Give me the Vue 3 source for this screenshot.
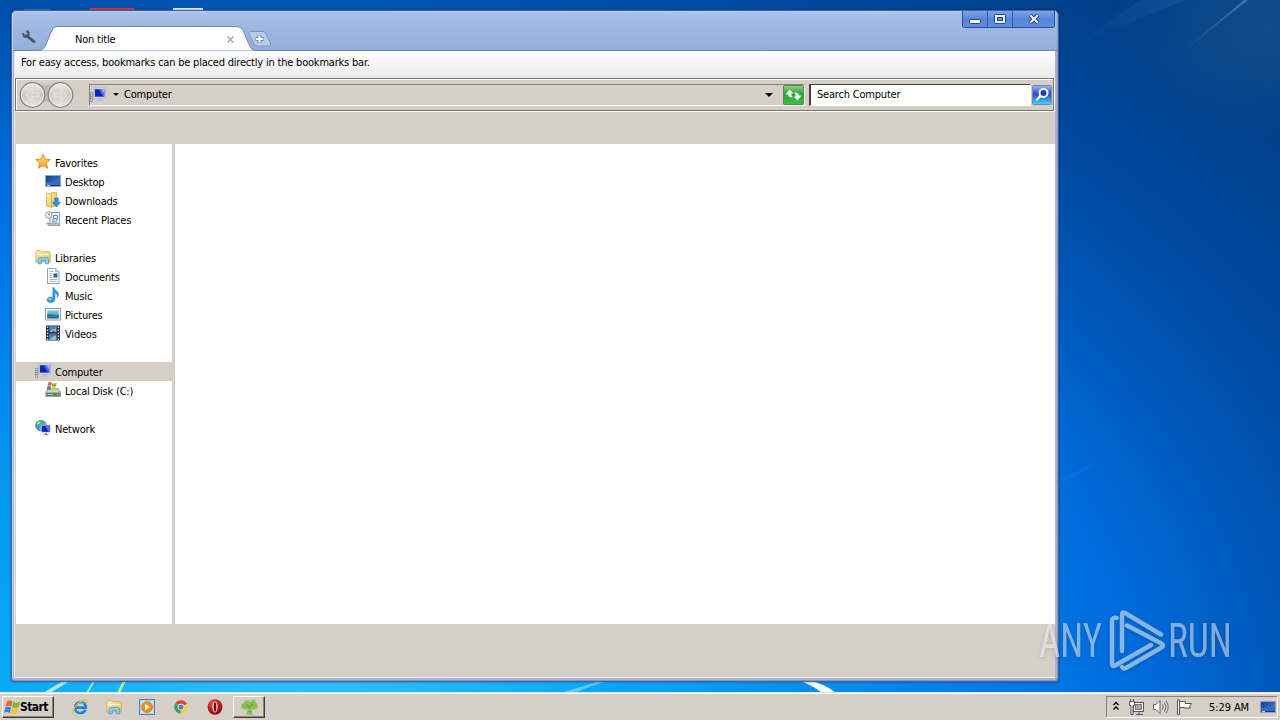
<script setup>
import { ref } from 'vue';

const clock = ref('5:29 AM');
const searchText = ref('Search Computer');
const selected = ref('Computer');

// Navigation pane, an empty label is a spacer row
const navItems = [
    { label: 'Favorites', icon: 'star' },
    { label: 'Desktop', icon: 'desktop', child: true },
    { label: 'Downloads', icon: 'downloads', child: true },
    { label: 'Recent Places', icon: 'recent', child: true },
    { label: '' },
    { label: 'Libraries', icon: 'folder' },
    { label: 'Documents', icon: 'document', child: true },
    { label: 'Music', icon: 'music', child: true },
    { label: 'Pictures', icon: 'picture', child: true },
    { label: 'Videos', icon: 'video', child: true },
    { label: '' },
    { label: 'Computer', icon: 'computer' },
    { label: 'Local Disk (C:)', icon: 'disk', child: true },
    { label: '' },
    { label: 'Network', icon: 'network' },
];

const quickLaunch = ['ie', 'folder', 'player', 'chrome', 'opera'];

const select = (item) => {
    if (item.label) {
        selected.value = item.label;
    }
};
</script>

<template>
    <div class="screen">
        <!-- icon definitions -->
        <svg class="defs" width="0" height="0">
            <defs>
                <linearGradient id="gGold" x1="0" y1="0" x2="0" y2="1"><stop offset="0" stop-color="#ffe680" /><stop offset="1" stop-color="#f39a1c" /></linearGradient>
                <linearGradient id="gFolder" x1="0" y1="0" x2="1" y2="1"><stop offset="0" stop-color="#fff3b4" /><stop offset="1" stop-color="#e3bd52" /></linearGradient>
                <linearGradient id="gScreen" x1="0" y1="0" x2="1" y2="1"><stop offset="0" stop-color="#123c86" /><stop offset=".5" stop-color="#2a62ba" /><stop offset="1" stop-color="#123b80" /></linearGradient>
                <linearGradient id="gMon" x1="0" y1="0" x2="1" y2="0"><stop offset="0" stop-color="#0a16a8" /><stop offset=".5" stop-color="#1a30d8" /><stop offset="1" stop-color="#7f9af0" /></linearGradient>
                <linearGradient id="gSky" x1="0" y1="0" x2="0" y2="1"><stop offset="0" stop-color="#8fd0f2" /><stop offset="1" stop-color="#2b7cc0" /></linearGradient>
                <radialGradient id="gRed" cx=".4" cy=".3" r=".8"><stop offset="0" stop-color="#f06a60" /><stop offset=".5" stop-color="#c01a18" /><stop offset="1" stop-color="#6d0808" /></radialGradient>
            </defs>
            <symbol id="star" viewBox="0 0 16 16">
                <path d="M8 .3l2.100 4.800 5.300.5-4 3.500 1.200 5.200L8 11.600l-4.600 2.700 1.200-5.200-4-3.500 5.300-.5z" fill="url(#gGold)" stroke="#e08a1e" stroke-width=".9" stroke-linejoin="round" />
            </symbol>
            <symbol id="desktop" viewBox="0 0 16 16">
                <rect x=".5" y="2.500" width="15" height="11" fill="url(#gScreen)" stroke="#90a4bc" />
                <path d="M1 13V9c4 2 9-1 14-5v9z" fill="#3a78cc" opacity=".7" />
                <path d="M1 12.500h14" stroke="#203864" />
                <path d="M2 12.500h3" stroke="#b8d8f4" />
            </symbol>
            <symbol id="downloads" viewBox="0 0 16 16">
                <path d="M1.500 1.500h4l1-.9h5v13l-5 1.800-5-1.400z" fill="url(#gFolder)" stroke="#cfa644" stroke-width=".8" />
                <path d="M6.500 1.500v13.500" stroke="#d9ae42" stroke-width=".8" />
                <path d="M9.800 6h3.400v4.300h2.300L11.500 15l-4-4.700h2.300z" fill="#2e93e4" stroke="#1768b0" stroke-width=".6" />
            </symbol>
            <symbol id="recent" viewBox="0 0 16 16">
                <path d="M5 1.500h9.500v13H3.500l-2-2.500H5z" fill="#eef3f7" stroke="#8493a2" stroke-width=".9" />
                <path d="M3 12.500h10.500v2H4.500z" fill="#b5c2ce" stroke="#8594a4" stroke-width=".6" />
                <path d="M8.500 4.500h4v3h-4zM7 9h3M11 9h2M7 11h5" fill="none" stroke="#6588ac" />
                <circle cx="3.800" cy="4" r="3.200" fill="#f2f5f7" stroke="#8b9298" stroke-width=".9" />
                <path d="M3.800 2v2h1.500" fill="none" stroke="#666" stroke-width=".7" />
            </symbol>
            <symbol id="folder" viewBox="0 0 16 16">
                <path d="M.8 13V3l1-1.500h4l1 1.200h7.700l.8 1.200V13z" fill="url(#gFolder)" stroke="#d0aa4b" stroke-width=".8" />
                <path d="M1.500 5.500h13" stroke="#fff8cf" />
                <path d="M3 14.800v-4.300q0-2 2-2h6.500q2.200 0 2.200 2v4.300h-3.200v-3.300H6.200v3.300z" fill="#8fcdf0" stroke="#4799cf" stroke-width=".8" />
            </symbol>
            <symbol id="document" viewBox="0 0 16 16">
                <path d="M2.500.5h8.200l3.300 3.300v11.700H2.500z" fill="#fff" stroke="#8898a8" stroke-width=".9" />
                <path d="M10.700.5v3.300H14" fill="#d5e4f2" stroke="#8898a8" stroke-width=".7" />
                <path d="M4.500 3.500h4M4.500 5.500h3M4.500 7.500h3M4.500 9.500h3M4.500 11.500h7.500M4.500 13.300h7.500" stroke="#86a6c8" stroke-width=".8" />
                <rect x="8.500" y="5.500" width="4" height="4" fill="#355f8a" />
            </symbol>
            <symbol id="music" viewBox="0 0 16 16">
                <path d="M9 .5c.3 3.200 4.500 3.200 4.500 6.700 0 1.600-.8 2.600-1.500 3.200.8-2.700-.7-4.200-2-4.600v6.500c0 2-2 3.300-4.200 3.300-2 0-3.800-1-3.800-2.800 0-1.700 1.800-2.800 3.700-2.800 1 0 1.700.2 2.200.5V.5z" fill="#2f9be4" stroke="#1976bb" stroke-width=".5" />
                <ellipse cx="5" cy="12" rx="1.700" ry=".9" fill="#9bd8fa" />
            </symbol>
            <symbol id="picture" viewBox="0 0 16 16">
                <rect x=".5" y="2.500" width="15" height="11.500" fill="#fff" stroke="#8a9aa8" />
                <rect x="2.200" y="4.200" width="11.600" height="8.200" fill="url(#gSky)" />
                <path d="M2.200 8c3 1 5-.3 7 1.400 2 0 3-.4 4.600-.6v1.300H2.200z" fill="#2f7d51" />
                <path d="M2.200 10.200h11.600v2.200H2.200z" fill="#2c6ca5" />
            </symbol>
            <symbol id="video" viewBox="0 0 16 16">
                <rect x="1" y=".5" width="14" height="15" fill="#252c38" />
                <path d="M4.200 1h7.600v6.300H4.200zM4.200 8.500h7.600V15H4.200z" fill="#3a88b8" />
                <path d="M5 7c1-5 5-1 6-5v5zM5 15c1-4 4-2 6-6v6z" fill="#7fc2df" />
                <path d="M8 5l3 2.300H7zM8 9h3.500v2z" fill="#b6404a" />
                <path d="M2.600 1.500V15M13.400 1.500V15" stroke="#dbe5ed" stroke-width="1.300" stroke-dasharray="1.400 1.600" />
            </symbol>
            <symbol id="computer" viewBox="0 0 16 16">
                <path d="M.5 5.500h2v9h-2z" fill="#d4d8d6" stroke="#7e857f" stroke-width=".7" />
                <path d="M1.300 7v5" stroke="#559458" stroke-width=".8" stroke-dasharray="1 1" />
                <rect x="3.500" y="1" width="12.200" height="10" fill="#dfe5f2" stroke="#9aa4ba" stroke-width=".6" />
                <rect x="4.800" y="2.200" width="9.500" height="7.500" fill="#1020b4" />
                <path d="M8.500 2.200h5.800v7.500h-1z" fill="#4c6ae6" />
                <path d="M11 2.200h3.300v4z" fill="#a5b7f6" />
                <path d="M8.300 11h3v1.800h2.200v1H6.300v-1h2z" fill="#b4bcc8" />
            </symbol>
            <symbol id="flag" viewBox="0 0 16 16">
                <path d="M2.600 2.500Q5 .5 8 2.400L6.900 7.200Q4.500 5.600 1.400 7.200z" fill="#ec642b" />
                <path d="M8.800 2.800q3 1.600 6.200-.2l-1.300 5q-3 1.500-6-.1z" fill="#76b83a" />
                <path d="M1.200 8.100q3-1.700 5.500 0l-1.200 5q-2.500-1.700-5.400-.1z" fill="#3a86d8" />
                <path d="M7.500 8.400q3 1.600 6 .1l-1.300 5q-3 1.600-5.900-.1z" fill="#f8c329" />
            </symbol>
            <symbol id="disk" viewBox="0 0 16 16">
                <path d="M.8 10L4 6.800h9l2.600 3.400v4.200H.8z" fill="#cfd4d4" stroke="#717b7d" stroke-width=".8" />
                <rect x="1.500" y="10.600" width="13.400" height="3.400" fill="#68786f" />
                <path d="M3 12.500h5" stroke="#b5cfb5" />
                <circle cx="12.800" cy="12.400" r=".9" fill="#63e04c" />
                <use href="#flag" x="1.500" y="-1" width="11" height="11" />
            </symbol>
            <symbol id="network" viewBox="0 0 16 16">
                <circle cx="6" cy="5.600" r="5.400" fill="#3e9ed8" stroke="#2673ac" stroke-width=".6" />
                <path d="M2 2.400C4 .1 6 .6 7 1.900L5.500 4.600 3 6.100 1.200 4.600zM4 8l3 1-1.400 2zM8 .8l3 2.800-2.700.6z" fill="#5fbd4a" />
                <path d="M2.500 4l2.300-2" stroke="#e6f8ff" stroke-width="1.100" />
                <rect x="5.800" y="4.800" width="10" height="8" fill="#d4daea" />
                <rect x="6.700" y="5.600" width="8.200" height="6.300" fill="#1222b8" />
                <path d="M10 5.600h4.900v6.300h-1z" fill="#5674e8" />
                <path d="M10 12.800h2v1.500h1.700v1H8.300v-1H10z" fill="#7c8bbd" />
            </symbol>
            <symbol id="ie" viewBox="0 0 16 16">
                <path d="M4 8.600h9.800Q13.800 3.200 8.600 3.200T3.200 8.600 8.600 14q3.500 0 4.800-3.200" fill="none" stroke="#2482d6" stroke-width="2.600" />
                <path d="M4.500 5q3.500-3 7.500-.2" fill="none" stroke="#6cc0f4" stroke-width="1" />
                <path d="M2 15.300C-1 13 3.500 5 9.500 2c4-2 6.300-1.200 5 2.200" fill="none" stroke="#e9b92d" stroke-width="1.200" />
            </symbol>
            <symbol id="player" viewBox="0 0 16 16">
                <rect x=".5" y=".5" width="15" height="15" fill="#a9d0f3" stroke="#4c87c2" />
                <rect x="2" y="2" width="12" height="12" fill="#d7ebfc" />
                <circle cx="8" cy="8" r="5.600" fill="#f58a16" stroke="#d46a08" stroke-width=".6" />
                <path d="M6.200 4.800L11 8l-4.800 3.200z" fill="#fff" />
            </symbol>
            <symbol id="chrome" viewBox="0 0 16 16">
                <path d="M8 8L2.200 4.500A6.700 6.700 0 0 1 14 5z" fill="#dc4537" />
                <path d="M8 8l6-3a6.700 6.700 0 0 1-6.600 9.700z" fill="#f8ce3c" />
                <path d="M8 8l-.6 6.700A6.700 6.700 0 0 1 2.200 4.500z" fill="#3ea34c" />
                <circle cx="8" cy="8" r="3.300" fill="#fff" />
                <circle cx="8" cy="8" r="2.600" fill="#3f7fe8" />
            </symbol>
            <symbol id="opera" viewBox="0 0 16 16">
                <ellipse cx="8" cy="8" rx="7.400" ry="7.700" fill="url(#gRed)" />
                <ellipse cx="8" cy="8" rx="2.600" ry="5.600" fill="#e9dcdc" />
                <ellipse cx="8" cy="8" rx="1.300" ry="4.800" fill="#7a0b0b" />
            </symbol>
            <symbol id="tree" viewBox="0 0 16 16">
                <path d="M8 8v6" stroke="#76a348" stroke-width="4" />
                <path d="M4 1.500h3l1.500 1.500L10 1.200h3l1 2.300 1.500 1.500v3L13 10l-3-.5L8 11l-2.500-1.500L3 10 .5 8V5L2.500 4z" fill="#86c053" stroke="#9dcf74" stroke-linejoin="round" />
                <path d="M5 5l3 3 3-3" fill="none" stroke="#62a038" />
                <path d="M3.500 15l4.500-3 4.500 3z" fill="#8fc068" />
            </symbol>
        </svg>

        <div class="desktop">
            <svg class="wallpaper" width="1280" height="720">
                <defs>
                    <radialGradient id="bg" gradientUnits="userSpaceOnUse" cx="0" cy="0" r="1" gradientTransform="translate(300 750) scale(1320 960)">
                        <stop offset="0" stop-color="#38c8f8" />
                        <stop offset=".23" stop-color="#08aaf6" />
                        <stop offset=".52" stop-color="#007ce8" />
                        <stop offset=".64" stop-color="#006cdc" />
                        <stop offset=".76" stop-color="#0056b6" />
                        <stop offset=".86" stop-color="#00489e" />
                        <stop offset="1" stop-color="#023f88" />
                    </radialGradient>
                    <radialGradient id="haze"><stop offset="0" stop-color="#2c6090" stop-opacity=".4" /><stop offset="1" stop-color="#2c6090" stop-opacity="0" /></radialGradient>
                    <linearGradient id="ray" x1="1" y1="0" x2="0" y2="1"><stop offset="0" stop-color="#78a6cf" stop-opacity=".5" /><stop offset="1" stop-color="#78a6cf" stop-opacity="0" /></linearGradient>
                    <linearGradient id="ray2" x1="1" y1="0" x2="0" y2="1"><stop offset="0" stop-color="#3a78b8" stop-opacity=".2" /><stop offset="1" stop-color="#3a78b8" stop-opacity="0" /></linearGradient>
                </defs>
                <rect width="1280" height="720" fill="url(#bg)" />
                <ellipse cx="1270" cy="30" rx="160" ry="110" fill="url(#haze)" />
                <path d="M1244 0h4l-73 58z" fill="url(#ray)" />
                <path d="M1140 0h45L1075 45z" fill="url(#ray2)" />
                <path d="M1059 485l45-26-45 20z" fill="#3a90ee" opacity=".12" />
                <path d="M43 693l20-12h7l-20 12zM86 693l7-12h2l-7 12z" fill="#d8f4ff" opacity=".8" />
                <path d="M117 693l6-12h3l-6 12z" fill="#b8ee90" />
                <path d="M560 693q20-6 40-12h9q-20 5-34 12z" fill="#9cdcff" opacity=".6" />
                <path d="M800 681h12q14 4 24 12h-14q-10-8-22-12z" fill="#f4fcff" />
                <rect x="24" y="9" width="26" height="3" fill="#5a7298" />
                <rect x="90" y="8" width="44" height="4" fill="#d83434" />
                <rect x="173" y="8" width="30" height="4" fill="#e8eef4" />
            </svg>

            <div class="window">
                <div class="titlebar">
                    <svg class="tab-shape" width="280" height="40">
                        <path d="M0 39.500h25q5 0 7.500-5L39 19q1.500-3.500 5-3.500H224q4 0 6 4l6.500 15q2 5 6 5H280" fill="#fff" stroke="#6f87b3" />
                        <!-- wrench -->
                        <path d="M13.500 24.500l7.500 6.200" stroke="#4b5567" stroke-width="2.800" stroke-linecap="round" />
                        <circle cx="13" cy="23" r="2.700" fill="none" stroke="#4b5567" stroke-width="2" stroke-dasharray="13.200 3.800" transform="rotate(-85 13 23)" />
                        <path d="M236.500 20.500h13.500q2 0 3 2l4.500 9.500q1 3-1.500 3H244q-2 0-3-2l-5-10q-.8-2.500.5-2.500z" fill="#b7cbed" stroke="#7c94c0" />
                        <path d="M246.500 24v8M242.500 28h8" stroke="#6d83aa" stroke-width="4.200" />
                        <path d="M246.500 24.500v7M243 28h7" stroke="#fff" stroke-width="2.200" />
                        <path d="M214.500 25.500l6 6m0-6l-6 6" stroke="#aaa" stroke-width="1.500" />
                    </svg>
                    <span class="tab-title">Non title</span>
                    <div class="win-buttons">
                        <button class="win-btn">
                            <svg width="14" height="12"><rect x="1.500" y="6.500" width="11" height="4" rx="1" fill="#fff" stroke="#28458a" /></svg>
                        </button>
                        <button class="win-btn">
                            <svg width="14" height="12"><rect x="1.500" y="1.500" width="11" height="9" rx="1" fill="#e8f0ff" stroke="#28458a" /><rect x="4.500" y="4.500" width="5" height="3" fill="#6b90d8" stroke="#28458a" /></svg>
                        </button>
                        <button class="win-btn close">
                            <svg width="14" height="12"><path d="M3 2l8 8m0-8l-8 8" stroke="#28458a" stroke-width="4" /><path d="M3.200 2.200l7.600 7.600m0-7.600l-7.600 7.600" stroke="#edf4ff" stroke-width="2" /></svg>
                        </button>
                    </div>
                </div>

                <div class="client">
                    <div class="bookmarks"><span>For easy access, bookmarks can be placed directly in the bookmarks bar.</span></div>

                    <div class="toolbar">
                        <svg class="travel" width="56" height="28">
                            <defs>
                                <linearGradient id="round" x1="0" y1="0" x2="0" y2="1"><stop offset="0" stop-color="#f0eeeb" /><stop offset=".5" stop-color="#cbc7c2" /><stop offset="1" stop-color="#eceae6" /></linearGradient>
                            </defs>
                            <path d="M14 3q14 2 28 0v20q-14-5-28 0z" fill="#bdb8b1" />
                            <g v-for="x in [13.5, 41.5]" :key="x">
                                <circle :cx="x" cy="14" r="12.300" fill="url(#round)" stroke="#85817b" stroke-width="1.200" />
                                <circle :cx="x" cy="14" r="11" fill="none" stroke="#f4f2ef" stroke-opacity=".7" />
                            </g>
                            <path d="M7 14l6-6v4h7v4h-7v4zM48 14l-6-6v4h-7v4h7v4z" fill="#d7d3ce" stroke="#e8e5e1" />
                        </svg>
                        <div class="address">
                            <svg width="16" height="16"><use href="#computer" /></svg>
                            <span class="caret small"></span>
                            <span class="path">Computer</span>
                            <span class="caret"></span>
                            <svg class="refresh" width="21" height="20">
                                <defs><linearGradient id="green" x1="0" y1="0" x2="0" y2="1"><stop offset="0" stop-color="#8ed184" /><stop offset=".45" stop-color="#2ea43a" /><stop offset="1" stop-color="#38c240" /></linearGradient></defs>
                                <rect x=".5" y=".5" width="20" height="19" rx="1" fill="url(#green)" stroke="#52895a" />
                                <path d="M2.500 9.500l4-5 4 4H8.200q0 2.500 1.800 4-5 0-5-3zM18.500 10.500l-4 5-4-4h2.300q0-2.500-1.800-4 5 0 5 3z" fill="#f2fff0" />
                            </svg>
                        </div>
                        <div class="search">{{ searchText }}</div>
                        <svg class="search-btn" width="20" height="20">
                            <defs><linearGradient id="blue" x1="0" y1="0" x2="0" y2="1"><stop offset="0" stop-color="#a7b7ef" /><stop offset=".45" stop-color="#2d4cc8" /><stop offset="1" stop-color="#4ad6f3" /></linearGradient></defs>
                            <rect x=".5" y=".5" width="19" height="19" rx="1" fill="url(#blue)" stroke="#6d88bd" />
                            <circle cx="11.500" cy="8" r="4" fill="#2038a8" stroke="#fff" stroke-width="2" />
                            <path d="M8.500 11L5 14.500" stroke="#fff" stroke-width="2.400" stroke-linecap="round" />
                        </svg>
                    </div>

                    <div class="panes">
                        <ul class="nav">
                            <li
                                v-for="(item, i) in navItems"
                                :key="i"
                                :class="{ child: item.child, selected: item.label && item.label === selected }"
                                @click="select(item)"
                            >
                                <svg v-if="item.icon" width="16" height="16"><use :href="'#' + item.icon" /></svg>
                                <span>{{ item.label }}</span>
                            </li>
                        </ul>
                        <div class="content"></div>
                    </div>
                </div>
            </div>

            <svg class="watermark" width="220" height="70">
                <g fill="#fff" fill-opacity=".5">
                    <text x="3" y="52" textLength="63" lengthAdjust="spacingAndGlyphs">ANY</text>
                    <text x="132" y="52" textLength="64" lengthAdjust="spacingAndGlyphs">RUN</text>
                </g>
                <path
                    d="M80.500 13q-4.500-1-4.500 3v43q0 3 3 1.500L115 40M86 46V9.500q0-3 3-1.500l36 21.500M91 20.500l34.500 18q3 2 0 4L90 63q-3 1.500-4-1"
                    fill="none" stroke="#fff" stroke-opacity=".53" stroke-width="4.500" stroke-linejoin="round" stroke-linecap="round"
                />
            </svg>
        </div>

        <div class="taskbar">
            <button class="start"><svg width="17" height="17" viewBox="0 0 16 16"><use href="#flag" /></svg><b>Start</b></button>
            <div class="quick">
                <svg v-for="icon in quickLaunch" :key="icon" width="16" height="16"><use :href="'#' + icon" /></svg>
            </div>
            <button class="task"><svg width="17" height="17" viewBox="0 0 16 16"><use href="#tree" /></svg></button>
            <div class="tray">
                <svg width="8" height="12"><path d="M1.500 4L4 1.500 6.500 4M1.500 8.500L4 6l2.500 2.500" fill="none" stroke="#000" stroke-width="1.400" /></svg>
                <svg class="net" width="17" height="17">
                    <rect x="5.500" y="3.500" width="10" height="9" fill="#fff" stroke="#555" />
                    <rect x="7.500" y="5.500" width="6" height="5" fill="#a5a5a5" stroke="#777" />
                    <path d="M8 15.500h7M11 13v2" stroke="#555" />
                    <path d="M1.500 2.500h5v4h-1.500v9h-2v-9H1.500z" fill="#fff" stroke="#555" />
                    <path d="M2.500 0v2.500M5.500 0v2.500" stroke="#555" />
                </svg>
                <svg class="vol" width="17" height="16">
                    <path d="M1.500 5.500h2.500l4-4v13l-4-4H1.500z" fill="#fff" stroke="#666" />
                    <path d="M10.500 5.500q1.500 2.500 0 5M12.500 3.500q3 4.500 0 9M14.200 1.800q4 6.200 0 12.400" fill="none" stroke="#777" />
                </svg>
                <svg class="act" width="17" height="16">
                    <path d="M1.500 1v14.500h2V1z" fill="#fff" stroke="#555" />
                    <path d="M3.500 2.500h6v2h6l-2 3 1 1.500h-6V8.500h-5z" fill="#fff" stroke="#555" />
                </svg>
                <span class="clock">{{ clock }}</span>
                <svg width="16" height="16"><use href="#desktop" /></svg>
            </div>
        </div>
    </div>
</template>

<style>
body {
    margin: 0;
    overflow: hidden;
}
</style>

<style scoped>
.screen {
    width: 1280px;
    height: 720px;
    display: flex;
    flex-direction: column;
    overflow: hidden;
    font-family: "DejaVu Sans Condensed", "DejaVu Sans", Tahoma, sans-serif;
    font-stretch: condensed;
    font-size: 11px;
    letter-spacing: -0.2px;
    color: #000;
}

svg {
    display: block;
    flex: none;
}

.defs {
    position: absolute;
}

.desktop {
    position: relative;
    height: 692px;
    overflow: hidden;
}

.window {
    position: absolute;
    left: 11px;
    top: 10px;
    width: 1048px;
    height: 672px;
    box-sizing: border-box;
    border: 1px solid #4a6294;
    border-radius: 5px 5px 4px 4px;
    background: #a5b3d8;
    padding: 0 3px 3px 3px;
    display: flex;
    flex-direction: column;
    box-shadow: inset 1px 1px 0 #c6d6f4, inset -1px -1px 0 #8794bc, 0 0 2px rgba(0, 20, 60, 0.6);
}

.titlebar {
    position: relative;
    flex: none;
    height: 40px;
    margin: 0 -2px;
    display: flex;
    align-items: flex-start;
    background: linear-gradient(#b0c9f0 0, #a5bee8 4px, #94add9 100%);
    border-radius: 4px 4px 0 0;
    box-shadow: inset 0 -1px 0 #6f87b3;
}

.tab-shape {
    position: absolute;
    left: 0;
    top: 0;
}

.tab-title {
    position: relative;
    margin: 22px 0 0 62px;
    line-height: 14px;
}

.win-buttons {
    display: flex;
    margin-left: auto;
    margin-right: 2px;
    border: 1px solid #2e4e94;
    border-top: 0;
    border-radius: 0 0 3px 3px;
    overflow: hidden;
}

.win-btn {
    width: 25px;
    height: 16px;
    padding: 0 0 0 5px;
    border: 0;
    border-right: 1px solid #3a5ca4;
    background: linear-gradient(#80a5e8, #5785da 50%, #5c8ce0);
}

.win-btn.close {
    width: 41px;
    padding-left: 14px;
    border-right: 0;
}

.client {
    flex: 1;
    display: flex;
    flex-direction: column;
    background: #d6cfc8;
    border-left: 1px solid #eeeae6;
    border-bottom: 1px solid #f2efec;
    margin-left: -1px;
}

.bookmarks {
    height: 27px;
    box-sizing: border-box;
    padding: 5px 0 0 6px;
    line-height: 14px;
    background: linear-gradient(#fdfdfd, #ebebeb);
}

.toolbar {
    height: 33px;
    box-sizing: border-box;
    margin: 0 1px 0 0;
    padding: 0 1px 0 3px;
    display: flex;
    align-items: center;
    border: 1px solid #77726c;
    box-shadow: 1px 1px 0 #fff, inset 1px 1px 0 #fff;
}

.travel {
    margin-top: 1px;
}

.address {
    width: 716px;
    height: 22px;
    box-sizing: border-box;
    margin: 0 0 0 14px;
    display: flex;
    align-items: center;
    border: 1px solid;
    border-color: #88827b #fff #fff #88827b;
}

.address .path {
    margin-top: -1px;
}

.caret {
    border: 4px solid transparent;
    border-top-color: #000;
    border-bottom: 0;
    margin-right: 10px;
}

.caret.small {
    border-width: 3px 3px 0;
    margin: 0 5px 0 7px;
}

.path {
    flex: 1;
}

.search {
    width: 222px;
    height: 22px;
    box-sizing: border-box;
    margin: 0 1px 0 4px;
    padding-left: 6px;
    line-height: 20px;
    background: #fff;
    border: solid;
    border-color: #45413d #fff #fff #45413d;
    border-width: 1px 1px 1px 2px;
}

.panes {
    display: flex;
    height: 480px;
    margin: 33px 0 0 1px;
}

.nav {
    width: 156px;
    box-sizing: border-box;
    margin: 0;
    padding: 9px 0 0;
    list-style: none;
    background: #fff;
}

.nav li {
    height: 19px;
    box-sizing: border-box;
    padding-left: 19px;
    display: flex;
    align-items: center;
    gap: 4px;
}

.nav li svg {
    margin-top: -1px;
}

.nav li span {
    padding-top: 2px;
}

.nav li.child {
    padding-left: 29px;
}

.nav li.selected {
    background: #d6cfc8;
}

.content {
    flex: 1;
    margin-left: 3px;
    background: #fff;
}

.watermark {
    position: absolute;
    left: 1036px;
    top: 605px;
    font-family: Roboto, "Liberation Sans", sans-serif;
    font-size: 49px;
    font-weight: 400;
    letter-spacing: 0;
    filter: drop-shadow(0 1px 2px rgba(0, 0, 0, 0.3));
}

.taskbar {
    height: 28px;
    box-sizing: border-box;
    padding: 3px 2px 0;
    display: flex;
    align-items: flex-start;
    background: #d6cfc8;
    border-top: 1px solid #e3dfda;
    box-shadow: inset 0 1px 0 #fff;
}

.start,
.task {
    height: 22px;
    box-sizing: border-box;
    display: flex;
    align-items: center;
    padding: 0 0 0 1px;
    background: #d6cfc8;
    border: 1px solid;
    border-color: #fff #403c38 #403c38 #fff;
    box-shadow: inset -1px -1px 0 #88827b;
    font-family: inherit;
    color: #000;
}

.start {
    width: 52px;
    font-size: 12px;
    font-weight: bold;
    letter-spacing: -0.6px;
}

.start svg {
    margin-right: -1px;
}

.quick {
    display: flex;
    gap: 17.7px;
    margin: 3px 10px 0 18px;
}

.task {
    width: 32px;
    padding-left: 7px;
}

.tray {
    width: 172px;
    height: 22px;
    box-sizing: border-box;
    margin-left: auto;
    padding: 0 1px 0 5px;
    display: flex;
    align-items: center;
    border: 1px solid;
    border-color: #88827b #fff #fff #88827b;
}

.net {
    margin-left: 8px;
}

.vol {
    margin-left: 7px;
}

.act {
    margin-left: 7px;
}

.clock {
    flex: 1;
    padding-right: 11px;
    text-align: right;
    white-space: nowrap;
    letter-spacing: -0.1px;
}
</style>
